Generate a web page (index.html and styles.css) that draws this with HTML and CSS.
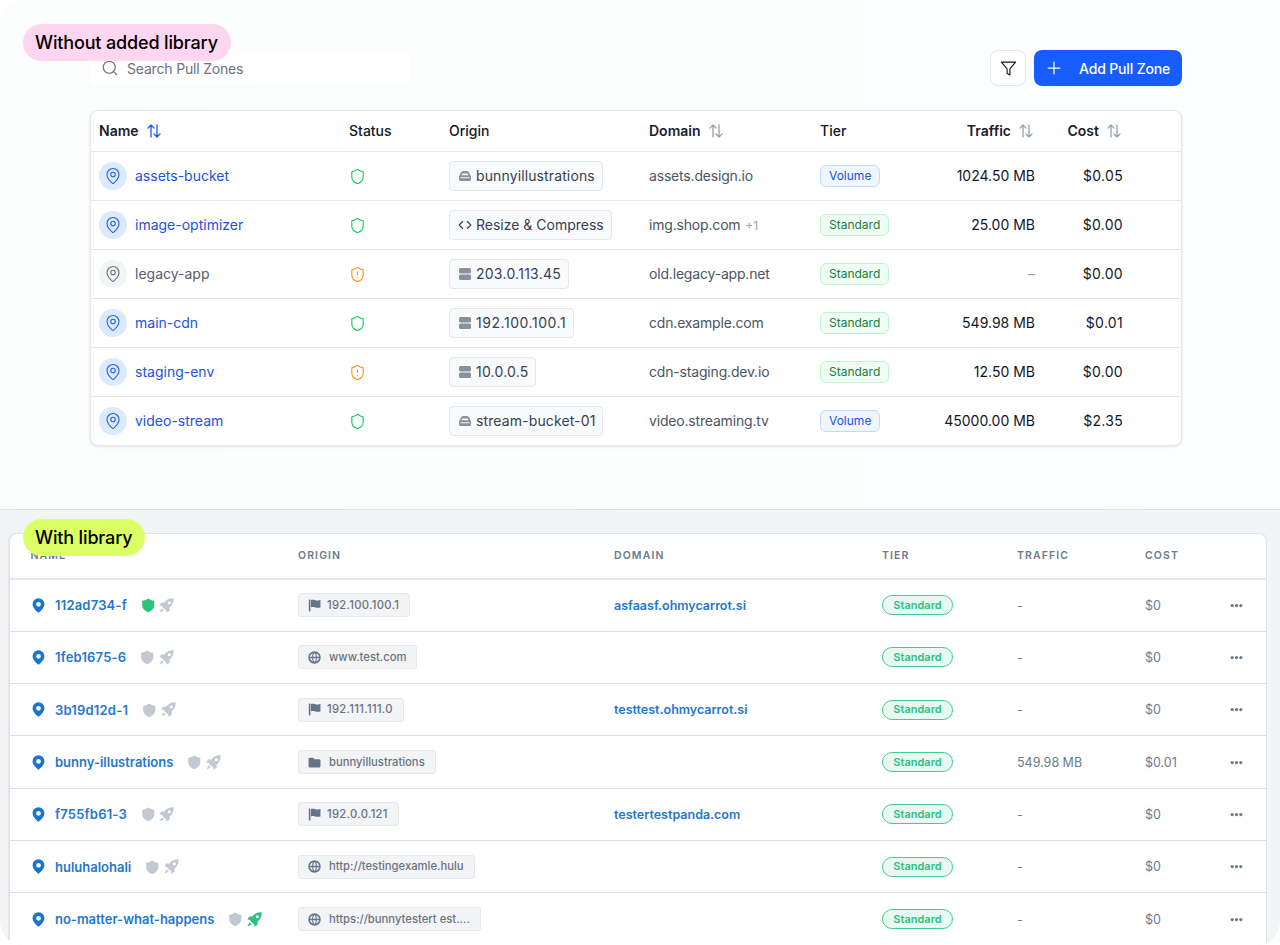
FILE: index.html
```html
<!DOCTYPE html>
<html lang="en">
<head>
<meta charset="utf-8">
<title>Pull Zones</title>
<link rel="stylesheet" href="styles.css">
</head>
<body>
<svg class="defs" width="0" height="0" aria-hidden="true">
  <symbol id="i-pin" viewBox="0 0 24 24"><path d="M20 10c0 5-5.5 10.2-7.4 11.8a1 1 0 0 1-1.2 0C9.500 20.200 4 15 4 10a8 8 0 0 1 16 0"/><circle cx="12" cy="10" r="3"/></symbol>
  <symbol id="i-shield" viewBox="0 0 24 24"><path d="M20 13c0 5-3.500 7.500-7.660 8.950a1 1 0 0 1-.67-.01C7.500 20.500 4 18 4 13V6a1 1 0 0 1 1-1c2 0 4.500-1.200 6.240-2.720a1.170 1.170 0 0 1 1.520 0C14.510 3.810 17 5 19 5a1 1 0 0 1 1 1z"/></symbol>
  <symbol id="i-shield-alert" viewBox="0 0 24 24"><path d="M20 13c0 5-3.500 7.500-7.660 8.950a1 1 0 0 1-.67-.01C7.500 20.500 4 18 4 13V6a1 1 0 0 1 1-1c2 0 4.500-1.200 6.240-2.720a1.170 1.170 0 0 1 1.520 0C14.510 3.810 17 5 19 5a1 1 0 0 1 1 1z"/><path d="M12 8v4M12 16h.01"/></symbol>
  <symbol id="i-sort" viewBox="0 0 16 16"><path d="M5 14V2M2 5l3-3 3 3M11 2v12M8 11l3 3 3-3"/></symbol>
  <symbol id="i-search" viewBox="0 0 24 24"><circle cx="11" cy="11" r="8"/><path d="m21 21-4.300-4.300"/></symbol>
  <symbol id="i-filter" viewBox="0 0 24 24"><path d="M22 3H2l8 9.460V19l4 2v-8.540z"/></symbol>
  <symbol id="i-plus" viewBox="0 0 24 24"><path d="M5 12h14M12 5v14"/></symbol>
  <symbol id="i-code" viewBox="0 0 24 24"><path d="m16 18 6-6-6-6M8 6l-6 6 6 6"/></symbol>
  <symbol id="i-server" viewBox="0 0 16 16"><rect x="2" y="2" width="12" height="5.500" rx="1.500"/><rect x="2" y="8.500" width="12" height="5.500" rx="1.500"/></symbol>
  <symbol id="i-bucket" viewBox="0 0 16 16"><path fill-rule="evenodd" d="M2 8.500 3.800 4.800A2.800 2.800 0 0 1 6.300 3h3.400a2.800 2.800 0 0 1 2.500 1.800L14 8.500v3a1.500 1.500 0 0 1-1.500 1.500h-9A1.500 1.500 0 0 1 2 11.500zM3.500 9.200v1h9v-1zM5.400 5.400l-.8 1.900h6.800l-.8-1.900z"/></symbol>
  <symbol id="i-pin-solid" viewBox="0 0 24 24"><path fill-rule="evenodd" d="M12 0.500a9.500 9.500 0 0 0-9.500 9.500c0 5.800 7 11.800 9.500 13.500 2.500-1.700 9.500-7.700 9.500-13.500A9.500 9.500 0 0 0 12 .5zm0 5.700a3.800 3.800 0 1 1 0 7.600 3.800 3.800 0 0 1 0-7.600z"/></symbol>
  <symbol id="i-shield-solid" viewBox="0 0 24 24"><path d="M12 1c2.500 2 6 3.300 10 3.500V12c0 5.500-4 9.300-10 11.500C6 21.300 2 17.500 2 12V4.500C6 4.300 9.500 3 12 1z"/></symbol>
  <symbol id="i-rocket" viewBox="0 0 24 24"><path fill-rule="evenodd" d="M23.500.5C17 .2 12.500 2 8.500 7H3.500L.5 12l5.200.8-.7 1.200 5 5 1.200-.7.8 5.200 5-3v-5c4.500-4 6.800-8.500 6.500-15zM16.500 5a2.500 2.500 0 1 1 0 5 2.500 2.500 0 0 1 0-5z"/><path d="M4 16.500.8 23.200 7.500 20z"/></symbol>
  <symbol id="i-flag" viewBox="0 0 24 24"><path d="M1.500 1h3v22h-3z"/><path d="M5.500 2c5.500-2.500 9.500 2.500 17.500 0v13.500c-8 2.500-12-2.500-17.500 0z"/></symbol>
  <symbol id="i-globe" viewBox="0 0 24 24"><path fill-rule="evenodd" d="M12 .5a11.500 11.500 0 1 0 0 23 11.500 11.500 0 0 0 0-23zM3.300 10.500h4.300c.1-2.500.6-4.600 1.400-6.300a9 9 0 0 0-5.700 6.300zm6.300 0h4.800c-.2-3-1.100-5.500-2.400-7-1.300 1.500-2.200 4-2.400 7zm6.800 0h4.300a9 9 0 0 0-5.700-6.300c.8 1.700 1.300 3.800 1.400 6.300zm4.300 3h-4.300c-.1 2.500-.6 4.600-1.400 6.300a9 9 0 0 0 5.700-6.300zm-6.300 0H9.600c.2 3 1.100 5.500 2.400 7 1.300-1.500 2.200-4 2.400-7zm-6.800 0H3.300A9 9 0 0 0 9 19.800c-.8-1.700-1.300-3.800-1.400-6.300z"/></symbol>
  <symbol id="i-folder" viewBox="0 0 24 24"><path d="M3 3h6.500l2.500 3h9a2 2 0 0 1 2 2v11a2 2 0 0 1-2 2H3a2 2 0 0 1-2-2V5a2 2 0 0 1 2-2z"/></symbol>
  <symbol id="i-dots" viewBox="0 0 24 24"><circle cx="4" cy="12" r="3"/><circle cx="12" cy="12" r="3"/><circle cx="20" cy="12" r="3"/></symbol>
</svg>

<div class="shell">
  <section class="top">
    <span class="tag tag-pink">Without added library</span>
    <div class="toolbar">
      <label class="search"><svg class="ic ic-search"><use href="#i-search"/></svg><span>Search Pull Zones</span></label>
      <div class="actions">
        <button class="btn-filter" type="button"><svg class="ic ic-filter"><use href="#i-filter"/></svg></button>
        <button class="btn-add" type="button"><svg class="ic ic-plus"><use href="#i-plus"/></svg><span>Add Pull Zone</span></button>
      </div>
    </div>
    <div class="table">
      <div class="row head">
        <div class="strong sortcell">Name <svg class="ic ic-sort active"><use href="#i-sort"/></svg></div>
        <div>Status</div>
        <div>Origin</div>
        <div class="strong sortcell">Domain <svg class="ic ic-sort"><use href="#i-sort"/></svg></div>
        <div>Tier</div>
        <div class="strong sortcell right-head">Traffic <svg class="ic ic-sort"><use href="#i-sort"/></svg></div>
        <div class="strong sortcell right-head">Cost <svg class="ic ic-sort"><use href="#i-sort"/></svg></div>
      </div>
      <div class="row">
        <div class="name"><span class="avatar"><svg class="ic ic-pin"><use href="#i-pin"/></svg></span><a>assets-bucket</a></div>
        <div><svg class="ic ok"><use href="#i-shield"/></svg></div>
        <div><span class="chip word"><svg class="ic-fill"><use href="#i-bucket"/></svg>bunnyillustrations</span></div>
        <div class="domain">assets.design.io</div>
        <div><span class="badge vol">Volume</span></div>
        <div class="num">1024.50 MB</div>
        <div class="num cost">$0.05</div>
      </div>
      <div class="row">
        <div class="name"><span class="avatar"><svg class="ic ic-pin"><use href="#i-pin"/></svg></span><a>image-optimizer</a></div>
        <div><svg class="ic ok"><use href="#i-shield"/></svg></div>
        <div><span class="chip"><svg class="ic ic-code"><use href="#i-code"/></svg>Resize &amp; Compress</span></div>
        <div class="domain">img.shop.com <small>+1</small></div>
        <div><span class="badge std">Standard</span></div>
        <div class="num">25.00 MB</div>
        <div class="num cost">$0.00</div>
      </div>
      <div class="row">
        <div class="name off"><span class="avatar"><svg class="ic ic-pin"><use href="#i-pin"/></svg></span><a>legacy-app</a></div>
        <div><svg class="ic warn"><use href="#i-shield-alert"/></svg></div>
        <div><span class="chip ip"><svg class="ic-fill"><use href="#i-server"/></svg>203.0.113.45</span></div>
        <div class="domain">old.legacy-app.net</div>
        <div><span class="badge std">Standard</span></div>
        <div class="num dash">–</div>
        <div class="num cost">$0.00</div>
      </div>
      <div class="row">
        <div class="name"><span class="avatar"><svg class="ic ic-pin"><use href="#i-pin"/></svg></span><a>main-cdn</a></div>
        <div><svg class="ic ok"><use href="#i-shield"/></svg></div>
        <div><span class="chip ip-wide"><svg class="ic-fill"><use href="#i-server"/></svg>192.100.100.1</span></div>
        <div class="domain">cdn.example.com</div>
        <div><span class="badge std">Standard</span></div>
        <div class="num">549.98 MB</div>
        <div class="num cost">$0.01</div>
      </div>
      <div class="row">
        <div class="name"><span class="avatar"><svg class="ic ic-pin"><use href="#i-pin"/></svg></span><a>staging-env</a></div>
        <div><svg class="ic warn"><use href="#i-shield-alert"/></svg></div>
        <div><span class="chip ip-short"><svg class="ic-fill"><use href="#i-server"/></svg>10.0.0.5</span></div>
        <div class="domain">cdn-staging.dev.io</div>
        <div><span class="badge std">Standard</span></div>
        <div class="num">12.50 MB</div>
        <div class="num cost">$0.00</div>
      </div>
      <div class="row">
        <div class="name"><span class="avatar"><svg class="ic ic-pin"><use href="#i-pin"/></svg></span><a>video-stream</a></div>
        <div><svg class="ic ok"><use href="#i-shield"/></svg></div>
        <div><span class="chip word"><svg class="ic-fill"><use href="#i-bucket"/></svg>stream-bucket-01</span></div>
        <div class="domain">video.streaming.tv</div>
        <div><span class="badge vol">Volume</span></div>
        <div class="num">45000.00 MB</div>
        <div class="num cost">$2.35</div>
      </div>
    </div>
  </section>

  <section class="bottom">
    <span class="tag tag-lime">With library</span>
    <div class="card">
      <div class="lrow lhead">
        <div>Name</div><div>Origin</div><div>Domain</div><div>Tier</div><div>Traffic</div><div>Cost</div><div></div>
      </div>
      <div class="lrow">
        <div class="lname hex"><svg class="pin-s"><use href="#i-pin-solid"/></svg><a>112ad734-f</a><svg class="st green"><use href="#i-shield-solid"/></svg><svg class="rk grey"><use href="#i-rocket"/></svg></div>
        <div><span class="lchip lip"><svg class="lc lc-flag"><use href="#i-flag"/></svg>192.100.100.1</span></div>
        <div class="ldomain">asfaasf.ohmycarrot.si</div>
        <div><span class="lbadge">Standard</span></div>
        <div class="ltext">-</div><div class="ltext">$0</div>
        <div class="more"><svg class="dots"><use href="#i-dots"/></svg></div>
      </div>
      <div class="lrow">
        <div class="lname hex"><svg class="pin-s"><use href="#i-pin-solid"/></svg><a>1feb1675-6</a><svg class="st grey"><use href="#i-shield-solid"/></svg><svg class="rk grey"><use href="#i-rocket"/></svg></div>
        <div><span class="lchip"><svg class="lc"><use href="#i-globe"/></svg>www.test.com</span></div>
        <div class="ldomain"></div>
        <div><span class="lbadge">Standard</span></div>
        <div class="ltext">-</div><div class="ltext">$0</div>
        <div class="more"><svg class="dots"><use href="#i-dots"/></svg></div>
      </div>
      <div class="lrow">
        <div class="lname hex"><svg class="pin-s"><use href="#i-pin-solid"/></svg><a>3b19d12d-1</a><svg class="st grey"><use href="#i-shield-solid"/></svg><svg class="rk grey"><use href="#i-rocket"/></svg></div>
        <div><span class="lchip lip"><svg class="lc lc-flag"><use href="#i-flag"/></svg>192.111.111.0</span></div>
        <div class="ldomain">testtest.ohmycarrot.si</div>
        <div><span class="lbadge">Standard</span></div>
        <div class="ltext">-</div><div class="ltext">$0</div>
        <div class="more"><svg class="dots"><use href="#i-dots"/></svg></div>
      </div>
      <div class="lrow">
        <div class="lname"><svg class="pin-s"><use href="#i-pin-solid"/></svg><a>bunny-illustrations</a><svg class="st grey"><use href="#i-shield-solid"/></svg><svg class="rk grey"><use href="#i-rocket"/></svg></div>
        <div><span class="lchip"><svg class="lc"><use href="#i-folder"/></svg>bunnyillustrations</span></div>
        <div class="ldomain"></div>
        <div><span class="lbadge">Standard</span></div>
        <div class="ltext">549.98 MB</div><div class="ltext">$0.01</div>
        <div class="more"><svg class="dots"><use href="#i-dots"/></svg></div>
      </div>
      <div class="lrow">
        <div class="lname hex"><svg class="pin-s"><use href="#i-pin-solid"/></svg><a>f755fb61-3</a><svg class="st grey"><use href="#i-shield-solid"/></svg><svg class="rk grey"><use href="#i-rocket"/></svg></div>
        <div><span class="lchip lip"><svg class="lc lc-flag"><use href="#i-flag"/></svg>192.0.0.121</span></div>
        <div class="ldomain">testertestpanda.com</div>
        <div><span class="lbadge">Standard</span></div>
        <div class="ltext">-</div><div class="ltext">$0</div>
        <div class="more"><svg class="dots"><use href="#i-dots"/></svg></div>
      </div>
      <div class="lrow">
        <div class="lname"><svg class="pin-s"><use href="#i-pin-solid"/></svg><a>huluhalohali</a><svg class="st grey"><use href="#i-shield-solid"/></svg><svg class="rk grey"><use href="#i-rocket"/></svg></div>
        <div><span class="lchip"><svg class="lc"><use href="#i-globe"/></svg>http://testingexamle.hulu</span></div>
        <div class="ldomain"></div>
        <div><span class="lbadge">Standard</span></div>
        <div class="ltext">-</div><div class="ltext">$0</div>
        <div class="more"><svg class="dots"><use href="#i-dots"/></svg></div>
      </div>
      <div class="lrow">
        <div class="lname"><svg class="pin-s"><use href="#i-pin-solid"/></svg><a>no-matter-what-happens</a><svg class="st grey"><use href="#i-shield-solid"/></svg><svg class="rk green"><use href="#i-rocket"/></svg></div>
        <div><span class="lchip"><svg class="lc"><use href="#i-globe"/></svg>https://bunnytestert est....</span></div>
        <div class="ldomain"></div>
        <div><span class="lbadge">Standard</span></div>
        <div class="ltext">-</div><div class="ltext">$0</div>
        <div class="more"><svg class="dots"><use href="#i-dots"/></svg></div>
      </div>
    </div>
  </section>
</div>
</body>
</html>
```

FILE: styles.css
```css
* { box-sizing: border-box; }
html, body { margin: 0; height: 945px; overflow: hidden; background: #fff; }
body { font-family: Inter, "Liberation Sans", sans-serif; color: #111827; }
.defs { position: absolute; }
.shell { height: 945px; display: flex; flex-direction: column; overflow: hidden; border-radius: 24px; }

/* Shared */
.tag { position: absolute; left: 23px; height: 37px; padding: 0 13px 0 12px; border-radius: 19px; font-size: 18px; font-weight: 500; letter-spacing: -.15px; line-height: 37px; color: #000; z-index: 2; white-space: nowrap; }
.tag-pink { top: 24px; background: #ffd6ef; }
.tag-lime { top: 519px; background: #dcff66; }

/* Top panel */
.top { flex: 0 0 510px; background: linear-gradient(90deg, #fbfdfc, #fdfefe); border-bottom: 1px solid #dfe2e6; padding: 50px 98px 0 90px; }
.toolbar { display: flex; justify-content: space-between; height: 36px; margin-bottom: 24px; }
.search { width: 320px; display: flex; align-items: center; gap: 8px; padding-left: 11px; background: #fff; border-radius: 8px; font-size: 14px; letter-spacing: -.18px; color: #6b7280; }
.actions { display: flex; gap: 8px; }
.ic { width: 16px; height: 16px; fill: none; stroke: currentColor; stroke-width: 2; stroke-linecap: round; stroke-linejoin: round; flex: none; }
.ic-search { width: 18px; height: 18px; color: #6b7280; stroke-width: 1.500; }
.btn-filter { width: 36px; height: 36px; padding: 0; display: flex; align-items: center; justify-content: center; background: #fff; border: 1px solid #e5e7eb; border-radius: 8px; color: #111827; }
.ic-filter { width: 17px; height: 17px; stroke-width: 1.600; }
.btn-add { width: 148px; height: 36px; display: flex; align-items: center; gap: 15px; padding: 0 0 0 10px; border: 0; border-radius: 8px; background: #175cff; color: #fff; font: 500 14px Inter, sans-serif; letter-spacing: -.15px; }
.ic-plus { width: 20px; height: 20px; stroke-width: 1.500; }

.table { background: #fff; border: 1px solid #e5e7eb; border-radius: 8px; box-shadow: 0 1px 3px rgba(0,0,0,.1); overflow: hidden; }
.row { display: grid; grid-template-columns: 250px 100px 200px 171px 100px 115px 88px 1fr; align-items: center; height: 49px; padding-left: 8px; border-top: 1px solid #e5e7eb; font-size: 14px; line-height: 16px; }
.head { height: 40px; border-top: 0; font-weight: 500; color: #111827; }
.strong { color: #1a2030; font-weight: 600; }
.sortcell { display: flex; align-items: center; gap: 7px; }
.right-head { justify-content: flex-end; padding-right: 1px; }
.ic-sort { color: #98a2b3; stroke-width: 1.300; }
.ic-sort.active { color: #175cff; }
.name { display: flex; align-items: center; gap: 8px; }
.name a { color: #2152e5; }
.avatar { width: 28px; height: 28px; border-radius: 50%; background: #dbeafe; color: #2563eb; display: flex; align-items: center; justify-content: center; }
.ic-pin { width: 18px; height: 18px; stroke-width: 1.500; }
.off a { color: #565e6c; }
.off .avatar { background: #f3f4f6; color: #6b7280; }
.ok, .warn { width: 17px; height: 17px; display: block; margin-left: -.5px; stroke-width: 1.500; }
.ok { color: #00c950; }
.warn { color: #ff8904; }
.chip { display: inline-flex; align-items: center; gap: 3px; height: 30px; padding: 0 7px; background: #f9fafb; border: 1px solid #e5e7eb; border-radius: 4px; color: #374151; white-space: nowrap; }
.word { letter-spacing: .12px; }
.ip { letter-spacing: .25px; }
.ip-wide { letter-spacing: .55px; }
.ip-short { letter-spacing: .2px; }
.ic-fill { width: 16px; height: 16px; fill: #8b919c; flex: none; }
.ic-code { width: 14px; height: 14px; margin: 0 1px; color: #374151; }
.domain { color: #4b5563; letter-spacing: -.18px; }
.domain small { font-size: 12px; color: #9ca3af; margin-left: 1px; letter-spacing: 0; }
.badge { display: inline-flex; align-items: center; height: 22px; padding: 0 8px; border-radius: 6px; font-size: 12px; line-height: 14px; border: 1px solid; }
.vol { background: #eff6ff; border-color: #bedbff; color: #2152e5; }
.std { background: #f0fdf4; border-color: #b9f8cf; color: #15803d; }
.num { text-align: right; color: #111827; }
.cost { letter-spacing: .3px; }
.dash { color: #9ca3af; }

/* Bottom panel */
.bottom { flex: 1; min-height: 0; background: #f3f4f6; padding: 23px 13px 0 9px; }
.card { background: #fff; border: 1px solid #dfe2e7; border-bottom: 0; border-radius: 8px 8px 0 0; box-shadow: -1px 0 0 #e5e7eb; }
.lrow { display: grid; grid-template-columns: 267.500px 316px 268px 135px 128px 85px 1fr; align-items: center; height: 52.330px; padding-left: 20.500px; border-bottom: 1px solid #dde1e7; font-size: 12px; color: #6b7280; }
.lhead { height: 45.500px; border-bottom-width: 2px; border-bottom-color: #e5e7eb; font-size: 10.500px; font-weight: 600; letter-spacing: 1.100px; text-transform: uppercase; color: #6b7a8c; }
.lname { display: flex; align-items: center; }
.lname a { font-size: 13px; font-weight: 600; color: #1f77d0; margin-right: 14px; white-space: nowrap; }
.hex a { letter-spacing: .2px; }
.pin-s { width: 15px; height: 15px; fill: #1873d3; margin-right: 9.500px; flex: none; }
.st { width: 14.500px; height: 14.500px; margin-right: 4px; flex: none; }
.rk { width: 15px; height: 15px; flex: none; }
.green { fill: #2ec27e; }
.grey { fill: #c3c9d2; }
.lchip { display: inline-flex; align-items: center; gap: 7px; height: 24px; padding: 0 10px 0 9px; background: #f3f4f6; border: 1px solid #e5e7eb; border-radius: 3px; font-size: 11.250px; line-height: 13px; font-weight: 500; color: #6b7280; white-space: nowrap; }
.lip { letter-spacing: .3px; }
.lc { width: 13px; height: 13px; fill: #64748b; flex: none; margin-right: 1px; }
.lc-flag { margin-right: -1px; }
.ldomain { font-size: 12.500px; font-weight: 600; color: #1f77d0; white-space: nowrap; }
.lbadge { display: inline-flex; align-items: center; justify-content: center; width: 71px; height: 20px; border: 1px solid #3fcf94; border-radius: 10px; background: #e9f8f2; font-size: 11px; line-height: 13px; font-weight: 600; color: #2ec27e; }
.ltext { font-size: 12.500px; color: #6b7a8c; }
.more { display: flex; }
.dots { width: 13px; height: 13px; fill: #6b7a8c; }
```
